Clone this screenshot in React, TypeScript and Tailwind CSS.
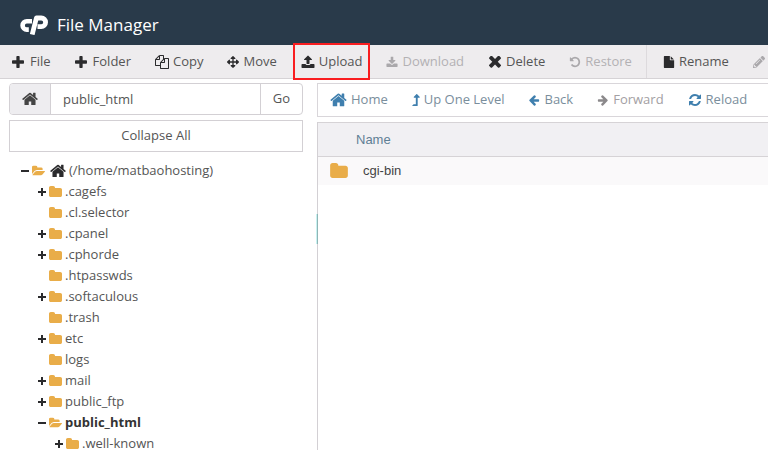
import { FaArrowsAlt, FaLevelUpAlt, FaPencilAlt } from "react-icons/fa";
import type { ReactNode } from "react";

const paths = {
  plus: "M1600 736v192q0 40-28 68t-68 28h-416v416q0 40-28 68t-68 28h-192q-40 0-68-28t-28-68v-416h-416q-40 0-68-28t-28-68v-192q0-40 28-68t68-28h416v-416q0-40 28-68t68-28h192q40 0 68 28t28 68v416h416q40 0 68 28t28 68z",
  copy: "M1696 384q40 0 68 28t28 68v1216q0 40-28 68t-68 28h-960q-40 0-68-28t-28-68v-288h-544q-40 0-68-28t-28-68v-672q0-40 20-88t48-76l408-408q28-28 76-48t88-20h416q40 0 68 28t28 68v328q68-40 128-40h416zm-544 213l-299 299h299v-299zm-640-384l-299 299h299v-299zm196 647l316-316v-416h-384v416q0 40-28 68t-68 28h-416v640h512v-256q0-40 20-88t48-76zm956 804v-1152h-384v416q0 40-28 68t-68 28h-416v640h896z",
  upload:
    "M1728 1248v320q0 40-28 68t-68 28h-1472q-40 0-68-28t-28-68v-320q0-40 28-68t68-28h427q21 56 70.5 92t110.5 36h256q61 0 110.5-36t70.5-92h427q40 0 68 28t28 68zm-325-648q-17 40-59 40h-256v448q0 26-19 45t-45 19h-256q-26 0-45-19t-19-45v-448h-256q-42 0-59-40-17-39 14-69l448-448q18-19 45-19t45 19l448 448q31 30 14 69z",
  download:
    "M1728 1216v320q0 40-28 68t-68 28h-1472q-40 0-68-28t-28-68v-320q0-40 28-68t68-28h465l135 136q58 56 136 56t136-56l136-136h464q40 0 68 28t28 68zm-325-569q17 41-14 70l-448 448q-18 19-45 19t-45-19l-448-448q-31-29-14-70 17-39 59-39h256v-448q0-26 19-45t45-19h256q26 0 45 19t19 45v448h256q42 0 59 39z",
  times:
    "M1490 1322q0 40-28 68l-136 136q-28 28-68 28t-68-28l-294-294-294 294q-28 28-68 28t-68-28l-136-136q-28-28-28-68t28-68l294-294-294-294q-28-28-28-68t28-68l136-136q28-28 68-28t68 28l294 294 294-294q28-28 68-28t68 28l136 136q28 28 28 68t-28 68l-294 294 294 294q28 28 28 68z",
  undo: "M1664 896q0 156-61 298t-164 245-245 164-298 61q-172 0-327-72.5t-264-204.5q-7-10-6.5-22.5t8.5-20.5l137-138q10-9 25-9 16 2 23 12 73 95 179 147t225 52q104 0 198.5-40.5t163.5-109.5 109.5-163.5 40.5-198.5-40.5-198.5-109.5-163.5-163.5-109.5-198.5-40.5q-98 0-188 35.5t-160 101.5l137 138q31 30 14 69-17 40-59 40h-448q-26 0-45-19t-19-45v-448q0-42 40-59 39-17 69 14l130 129q107-101 244.5-156.5t284.5-55.5q156 0 298 61t245 164 164 245 61 298z",
  file: "M1152 512v-472q22 14 36 28l408 408q14 14 28 36h-472zm-128 32q0 40 28 68t68 28h544v1056q0 40-28 68t-68 28h-1344q-40 0-68-28t-28-68v-1600q0-40 28-68t68-28h800v544z",
  home: "M1472 992v480q0 26-19 45t-45 19h-384v-384h-256v384h-384q-26 0-45-19t-19-45v-480q0-1 .5-3t.5-3l575-474 575 474q1 2 1 6zm223-69l-62 74q-8 9-21 11h-3q-13 0-21-7l-692-577-692 577q-12 8-24 7-13-2-21-11l-62-74q-8-10-7-23.5t11-21.5l719-599q32-26 76-26t76 26l244 204v-195q0-14 9-23t23-9h192q14 0 23 9t9 23v408l219 182q10 8 11 23.5t-7 22.5z",
  arrow:
    "M1664 896v128q0 53-32.5 90.5t-84.5 37.5h-704l293 294q38 36 38 90t-38 90l-75 76q-37 37-90 37-52 0-91-37l-651-652q-37-37-37-90 0-52 37-91l651-650q38-38 91-38 52 0 90 38l75 74q38 38 38 91t-38 91l-293 293h704q52 0 84.5 37.5t32.5 90.5z",
  reload:
    "M1639 1056q0 5-1 7-64 268-268 434.5t-478 166.5q-146 0-282.5-55t-243.5-157l-129 129q-19 19-45 19t-45-19-19-45v-448q0-26 19-45t45-19h448q26 0 45 19t19 45-19 45l-137 137q71 66 161 102t187 36q134 0 250-65t186-179q11-17 53-117 8-23 30-23h192q13 0 22.5 9.5t9.5 22.5zm25-800v448q0 26-19 45t-45 19h-448q-26 0-45-19t-19-45 19-45l138-138q-148-137-349-137-134 0-250 65t-186 179q-11 17-53 117-8 23-30 23h-199q-13 0-22.5-9.5t-9.5-22.5v-7q65-268 270-434.5t480-166.5q146 0 284 55.5t245 156.5l130-129q19-19 45-19t45 19 19 45z",
  folder:
    "M1728 608v704q0 92-66 158t-158 66h-1216q-92 0-158-66t-66-158v-960q0-92 66-158t158-66h320q92 0 158 66t66 158v32h672q92 0 158 66t66 158z",
  folderOpen:
    "M1879 952q0 31-31 66l-336 396q-43 51-120.5 86.5t-143.5 35.5h-1088q-34 0-60.5-13t-26.5-43q0-31 31-66l336-396q43-51 120.5-86.5t143.5-35.5h1088q34 0 60.5 13t26.5 43zm-343-344v160h-832q-94 0-197 47.5t-164 119.5l-337 396-5 6q0-4-.5-12.5t-.5-12.5v-960q0-92 66-158t158-66h320q92 0 158 66t66 158v32h544q92 0 158 66t66 158z",
};

type IconName = keyof typeof paths;

const boxes: Partial<Record<IconName, string>> = {
  plus: "192 128 1643 1408",
  times: "200 392 1388 1190",
  folder: "64 128 1664 1408",
  folderOpen: "0 128 1880 1408",
  home: "64 200 1664 1400",
};

function Icon({ name, className }: { name: IconName; className: string }) {
  return (
    <svg
      aria-hidden="true"
      viewBox={boxes[name] ?? "0 0 1792 1792"}
      fill="currentColor"
      className={`shrink-0 ${className}`}
    >
      <path d={paths[name]} />
    </svg>
  );
}

function Tool({
  icon,
  label,
  disabled,
  highlighted,
  iconOnly,
}: {
  icon: ReactNode;
  label: string;
  disabled?: boolean;
  highlighted?: boolean;
  iconOnly?: boolean;
}) {
  return (
    <button
      type="button"
      disabled={disabled}
      aria-label={label}
      className={`relative flex h-full shrink-0 items-center gap-1 px-3 ${
        disabled ? "text-[#b3b1b4]" : "text-[#555555]"
      }`}
    >
      <span className={disabled ? "text-[#aaa8ab]" : "text-[#2b2b2d]"}>{icon}</span>
      {!iconOnly && label}
      {highlighted && (
        <span className="pointer-events-none absolute inset-x-1 -inset-y-0.5 border-2 border-[#f91d20]" />
      )}
    </button>
  );
}

function NavButton({
  icon,
  label,
  disabled,
}: {
  icon: ReactNode;
  label: string;
  disabled?: boolean;
}) {
  return (
    <button
      type="button"
      disabled={disabled}
      className={`flex h-full shrink-0 items-center gap-1 px-3 ${
        disabled ? "text-[#a3a0a3]" : "text-[#7a8e9c]"
      }`}
    >
      <span className={disabled ? "text-[#8b898b]" : "text-[#3f7fae]"}>{icon}</span>
      {label}
    </button>
  );
}

type Node = { name: string; toggle?: "+" | "-"; bold?: boolean; children?: Node[] };

const tree: Node[] = [
  { name: ".cagefs", toggle: "+" },
  { name: ".cl.selector" },
  { name: ".cpanel", toggle: "+" },
  { name: ".cphorde", toggle: "+" },
  { name: ".htpasswds" },
  { name: ".softaculous", toggle: "+" },
  { name: ".trash" },
  { name: "etc", toggle: "+" },
  { name: "logs" },
  { name: "mail", toggle: "+" },
  { name: "public_ftp", toggle: "+" },
  {
    name: "public_html",
    toggle: "-",
    bold: true,
    children: [{ name: ".well-known", toggle: "+" }],
  },
];

function Toggle({ sign, name }: { sign?: "+" | "-"; name: string }) {
  if (!sign) return <span className="w-2 shrink-0" />;
  return (
    <button
      type="button"
      aria-label={`${sign === "+" ? "Expand" : "Collapse"} ${name}`}
      className="w-2 shrink-0 text-[#2b2b2d]"
    >
      <svg viewBox="0 0 8 8" className="size-2" stroke="currentColor" strokeWidth="2">
        <path d={sign === "+" ? "M0 4h8M4 0v8" : "M0 4h8"} />
      </svg>
    </button>
  );
}

function Branch({ nodes }: { nodes: Node[] }) {
  return (
    <ul className="pl-[17px]">
      {nodes.map((node) => (
        <li key={node.name}>
          <div className="flex h-[21px] items-center gap-[3px]">
            <Toggle sign={node.toggle} name={node.name} />
            <Icon
              name={node.children ? "folderOpen" : "folder"}
              className="h-[11px] w-[13px] text-[#e9ad49]"
            />
            <span className={node.bold ? "font-bold text-[#333333]" : ""}>{node.name}</span>
          </div>
          {node.children && <Branch nodes={node.children} />}
        </li>
      ))}
    </ul>
  );
}

export default function App() {
  return (
    <div className="flex h-screen flex-col overflow-hidden bg-white font-['Open_Sans','Noto_Sans',sans-serif] text-[13px] text-[#555555]">
      <header className="flex h-[45px] shrink-0 items-center gap-[9px] bg-[#293a4a] px-5 pt-1 text-white">
        <svg viewBox="0 0 28 20" className="h-5 w-7" fill="none" stroke="currentColor" aria-label="cPanel" role="img">
          <path d="M12 6.200H6.800A4 4 0 0 0 6.800 14.600H8.800" strokeWidth="4.600" />
          <path d="M12.200 19.500L16.400 3H21.300A4.200 4.200 0 0 1 21.300 11.600H17.500" strokeWidth="4.800" strokeLinejoin="round" />
        </svg>
        <h1 className="text-[17px]">File Manager</h1>
      </header>

      <div className="flex h-[34px] shrink-0 border-b border-[#d6d3d6] bg-[#eeecee]">
        <Tool icon={<Icon name="plus" className="h-3 w-3.5" />} label="File" />
        <Tool icon={<Icon name="plus" className="h-3 w-3.5" />} label="Folder" />
        <Tool icon={<Icon name="copy" className="size-3.5" />} label="Copy" />
        <Tool icon={<FaArrowsAlt className="size-3" />} label="Move" />
        <Tool icon={<Icon name="upload" className="size-3.5" />} label="Upload" highlighted />
        <Tool icon={<Icon name="download" className="size-3" />} label="Download" disabled />
        <Tool icon={<Icon name="times" className="h-3 w-3.5" />} label="Delete" />
        <Tool icon={<Icon name="undo" className="size-3" />} label="Restore" disabled />
        <div className="ml-0.5 h-full w-px shrink-0 bg-[#dddadd]" />
        <div className="ml-1 flex h-full">
          <Tool icon={<Icon name="file" className="h-3.5 w-3" />} label="Rename" />
          <Tool icon={<FaPencilAlt className="size-3" />} label="Edit" disabled iconOnly />
        </div>
      </div>

      <main className="flex min-h-0 flex-1 gap-3.5 pt-1 pl-[9px]">
        <aside className="w-[294px] shrink-0">
          <form className="flex h-8 overflow-hidden rounded border border-[#d3d0d4]">
            <button
              type="button"
              aria-label="Home directory"
              className="flex w-[41px] shrink-0 items-center justify-center border-r border-[#d3d0d4] bg-[#eeedf0] text-[#444444]"
            >
              <Icon name="home" className="h-3.5 w-4" />
            </button>
            <input
              type="text"
              aria-label="Directory"
              defaultValue="public_html"
              className="min-w-0 flex-1 px-3 pt-0.5 outline-none"
            />
            <button type="submit" className="w-[42px] shrink-0 border-l border-[#d3d0d4]">
              Go
            </button>
          </form>
          <button type="button" className="mt-[5px] h-8 w-full border border-[#d3d0d4]">
            Collapse All
          </button>
          <div className="mt-2 pl-3 leading-none">
            <div className="flex h-[21px] items-center gap-[3px]">
              <Toggle sign="-" name="home" />
              <Icon name="folderOpen" className="h-[11px] w-[13px] text-[#e9ad49]" />
              <Icon name="home" className="ml-0.5 h-3.5 w-4 text-[#2b2b2d]" />
              <span>(/home/matbaohosting)</span>
            </div>
            <Branch nodes={tree} />
          </div>
        </aside>

        <section className="flex min-w-0 flex-1 flex-col">
          <nav className="flex h-[34px] shrink-0 border-y border-l border-[#d9d6da]">
            <NavButton icon={<Icon name="home" className="h-3.5 w-[17px]" />} label="Home" />
            <NavButton icon={<FaLevelUpAlt className="h-3 w-2" />} label="Up One Level" />
            <NavButton icon={<Icon name="arrow" className="size-3" />} label="Back" />
            <NavButton icon={<Icon name="arrow" className="size-3 -scale-x-100" />} label="Forward" disabled />
            <NavButton icon={<Icon name="reload" className="size-3.5" />} label="Reload" />
          </nav>
          <div className="relative mt-[5px] flex min-h-0 flex-1 border-l border-[#d3d0d4]">
            <span className="absolute top-[92px] -left-0.5 h-[30px] w-0.5 border-r border-[#8fb5b5] bg-[#c8f2f2]" />
            <table className="h-fit w-full border-collapse text-left font-['Liberation_Sans',Arial,sans-serif]">
              <thead>
                <tr className="h-[34px] border-y border-[#d6d3d6] bg-[#f1f0f3] text-[#5f7f95]">
                  <th className="pl-[38px] font-normal">Name</th>
                </tr>
              </thead>
              <tbody>
                <tr className="h-7 bg-[#faf9fa] text-[#444444]">
                  <td className="pl-3">
                    <div className="flex items-center gap-[15px]">
                      <Icon name="folder" className="h-[15px] w-[18px] text-[#e9ad49]" />
                      cgi-bin
                    </div>
                  </td>
                </tr>
              </tbody>
            </table>
          </div>
        </section>
      </main>
    </div>
  );
}
